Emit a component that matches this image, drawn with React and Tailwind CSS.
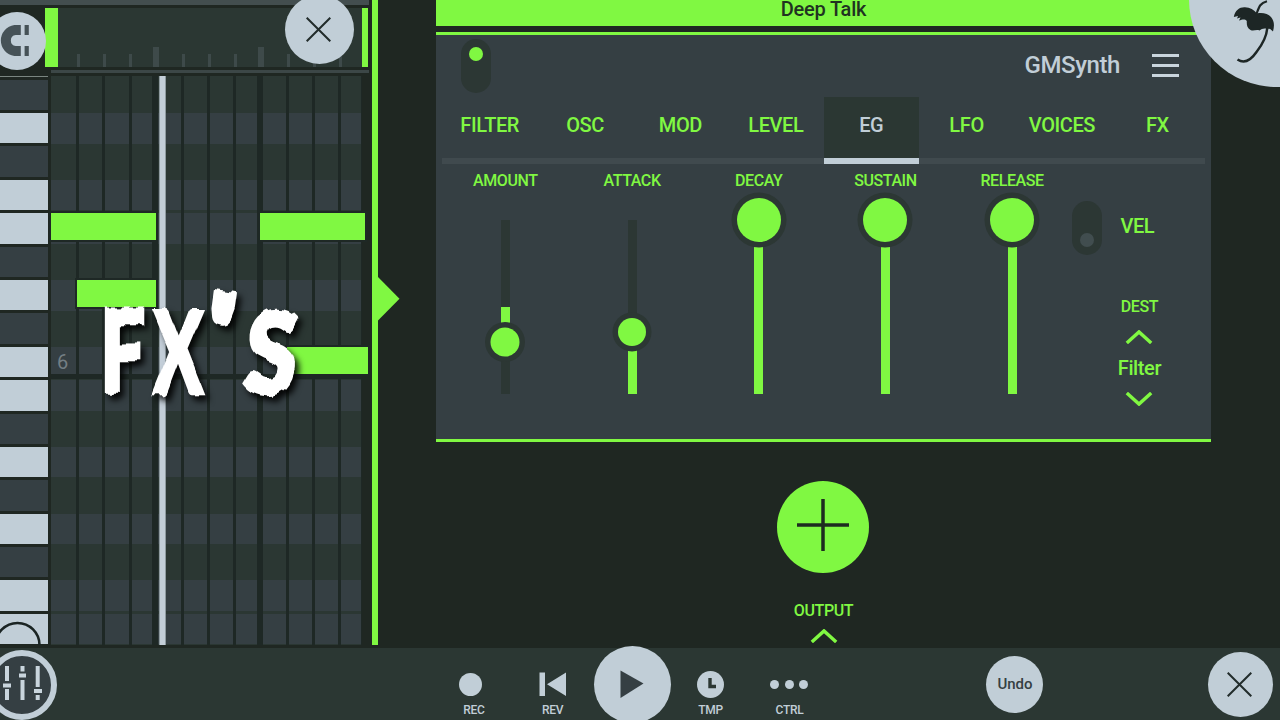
import { useState } from 'react';
import clsx from 'clsx';

// true = white key, from the top of the visible range
const KEYS = [
  false, true, false, true, true, false, true, false, true,
  true, false, true, false, true, false, true, true,
];

const NOTES = [
  { id: 1, className: 'left-[51px] top-[137.4px] w-[105px]' },
  { id: 2, className: 'left-[260px] top-[137.4px] w-[105px]' },
  { id: 3, className: 'left-[77px] top-[204px] w-[79px]' },
  { id: 4, className: 'left-[287px] top-[271px] w-[81px]' },
];

const TABS = ['FILTER', 'OSC', 'MOD', 'LEVEL', 'EG', 'LFO', 'VOICES', 'FX'];

// knob and fill are measured in px from the top of the track
const SLIDERS = [
  { name: 'AMOUNT', knob: 122, size: 29, from: 87, to: 122 },
  { name: 'ATTACK', knob: 112, size: 28, from: 112, to: 174 },
  { name: 'DECAY', knob: 0, size: 44, from: 0, to: 174 },
  { name: 'SUSTAIN', knob: 0, size: 44, from: 0, to: 174 },
  { name: 'RELEASE', knob: 0, size: 44, from: 0, to: 174 },
];

function CloseIcon() {
  return (
    <svg width="25" height="25" viewBox="0 0 25 25" stroke="#222c2b" strokeWidth="2">
      <path d="M0.7 0.7 L24.3 24.3 M24.3 0.7 L0.7 24.3" />
    </svg>
  );
}

function Chevron({ down, className }) {
  return (
    <svg
      width="28"
      height="14"
      viewBox="0 0 28 14"
      fill="none"
      stroke="#80f842"
      strokeWidth="3.4"
      className={clsx(down && 'rotate-180', className)}
    >
      <path d="M1.8 13 L14 1.9 L26.2 13" />
    </svg>
  );
}

function Ruler() {
  return (
    <div className="flex h-[59px] pl-[45px]">
      <div className="w-[13px] bg-[#80f842]" />
      <div className="flex w-[304px] items-end bg-[#2b3733] pl-[7px]">
        {Array.from({ length: 11 }, (_, i) => (
          <div key={i} className="relative h-full w-[26.2px] shrink-0">
            <div
              className={clsx(
                'absolute bottom-0 bg-[#3e4a4a]',
                i % 4 === 3 ? 'left-[9.6px] h-5 w-[6px]' : 'left-3 h-[13px] w-[3px]'
              )}
            />
          </div>
        ))}
      </div>
      <div className="w-[6px] bg-[#80f842]" />
    </div>
  );
}

function PianoRoll() {
  return (
    <div className="relative flex h-[569px] overflow-hidden">
      <div className="w-12 shrink-0 border-t border-[#7a8580] pt-[2.6px]">
        {KEYS.map((white, i) => (
          <div key={i} className="h-[33.4px]">
            <div className={clsx('h-[30.4px]', white ? 'bg-[#c1ced7]' : 'bg-[#353f43]')} />
          </div>
        ))}
      </div>
      <svg className="absolute bottom-0 left-0" width="48" height="24" fill="none" stroke="#1a2423" strokeWidth="2.6">
        <circle cx="17.5" cy="24" r="22" />
      </svg>

      <div className="relative ml-[3px] w-[311px] overflow-hidden bg-[#2b3733] pt-[3.6px]">
        {KEYS.map((white, i) => (
          <div key={i} className="h-[33.4px]">
            <div className={clsx('h-[30.6px]', white ? 'bg-[#353f43]' : 'bg-[#2b3733]')} />
          </div>
        ))}
        <div className="absolute left-0 top-[298px] h-[5px] w-full bg-[#1e2825]" />
        <div className="absolute inset-y-0 left-0 flex">
          {Array.from({ length: 12 }, (_, i) => (
            <div key={i} className="flex w-[26.2px] shrink-0 justify-end">
              <div
                className={clsx(
                  'translate-x-[2px] bg-[#1e2825]',
                  i % 4 === 3 ? 'w-[6px]' : 'w-[3px]'
                )}
              />
            </div>
          ))}
        </div>
        <span className="absolute left-[6px] top-[273px] text-[20px] leading-[26px] text-[#737e83]">6</span>
      </div>

      {NOTES.map((n) => (
        <div
          key={n.id}
          className={clsx('absolute h-[27px] bg-[#80f842] shadow-[0_0_0_2px_#1e2825]', n.className)}
        />
      ))}
      <div className="absolute left-[159px] top-0 h-full w-[7px] border-x border-[#8e9a9f] bg-[#c3ced8]" />
    </div>
  );
}

function Editor() {
  return (
    <section className="relative h-[648px] w-[378px] shrink-0">
      <div className="flex h-[645px]">
        <div className="w-[372px]">
          <div className="mb-[3px] h-[5px] w-[369px] bg-[#434e4f]" />
          <Ruler />
          <div className="mb-[3px] ml-[51px] mt-[3px] h-[3px] w-[318px] bg-[#3c4747]" />
          <PianoRoll />
        </div>
        <div className="w-[6px] bg-[#80f842]" />
      </div>
      <svg className="absolute left-[377px] top-[276px]" width="24" height="46" fill="#80f842">
        <path d="M0 0 L22.5 22.7 L0 45.4 Z" />
      </svg>

      <button className="absolute left-[-12px] top-[11.5px] h-[58px] w-[58px] rounded-full bg-[#c1ced7]">
        <svg className="absolute left-[10px] top-3" width="34" height="34" fill="none" stroke="#465257">
          <path d="M22.8 6 H17 A10.6 10.6 0 0 0 17 27 H22.8" strokeWidth="10" />
          <path d="M28.7 1 V11 M28.7 22 V32" strokeWidth="4.2" />
        </svg>
      </button>
      <button className="absolute left-[284.5px] top-[-5px] flex h-[69px] w-[69px] items-center justify-center rounded-full bg-[#c1ced7] pr-[2px]">
        <CloseIcon />
      </button>
    </section>
  );
}

function Toggle({ on }) {
  return (
    <div
      className={clsx(
        'flex h-[54px] w-[30px] justify-center rounded-full bg-[#2c3734] px-2',
        on ? 'items-start py-[7.5px]' : 'items-end py-2'
      )}
    >
      <div className={clsx('h-[14px] w-[14px] rounded-full', on ? 'bg-[#80f842]' : 'bg-[#414d4f]')} />
    </div>
  );
}

function Slider({ name, knob, size, from, to }) {
  return (
    <div className="flex w-[126.7px] flex-col items-center text-[16px] leading-5">
      {name}
      <div className="relative mt-[29px] h-[174px] w-[9px] bg-[#2c3734]">
        <div className="absolute w-full bg-[#80f842]" style={{ top: from, height: to - from }} />
        <div
          className="absolute left-1/2 -translate-x-1/2 -translate-y-1/2 rounded-full bg-[#80f842] shadow-[0_0_0_5.5px_#2c3734]"
          style={{ top: knob, width: size, height: size }}
        />
      </div>
    </div>
  );
}

function SynthPanel() {
  const [tab, setTab] = useState('EG');

  return (
    <div className="ml-[58px] w-[775px] font-medium tracking-[-0.4px] text-[#80f842]">
      <div className="h-[26px] bg-[#80f842] text-center text-[20px] leading-[19px] tracking-[-0.2px] text-[#203321]">
        Deep Talk
      </div>
      <div className="mt-[6px] h-[410px] border-y-[3px] border-[#80f842] bg-[#353f43]">
        <div className="flex h-[62px] justify-between pl-[25px] pr-8 pt-1">
          <Toggle on />
          <div className="flex h-[52px] items-center gap-8 text-[24px] text-[#c1ced7]">
            GMSynth
            <div className="flex flex-col gap-[7px] pt-[1px]">
              <div className="h-[3px] w-[27px] bg-[#c9d5dd]" />
              <div className="h-[3px] w-[27px] bg-[#c9d5dd]" />
              <div className="h-[3px] w-[27px] bg-[#c9d5dd]" />
            </div>
          </div>
        </div>

        <div className="mx-[6px] grid h-[67px] grid-cols-8 text-[20px]">
          {TABS.map((t) => (
            <button
              key={t}
              onClick={() => setTab(t)}
              className={clsx(
                'border-b-[6px] pb-[5px]',
                t === tab ? 'border-[#c1ced7] bg-[#2b3733] text-[#c1ced7]' : 'border-[#404a4e]'
              )}
            >
              {t}
            </button>
          ))}
        </div>

        <div className="flex pl-[6px] pt-[7px]">
          {SLIDERS.map((s) => (
            <Slider key={s.name} {...s} />
          ))}
          <div className="w-[135px] pt-[29.5px]">
            <div className="flex gap-[18px] text-[20px] leading-[50px]">
              <div className="-ml-[3px]">
                <Toggle />
              </div>
              VEL
            </div>
            <div className="ml-[18px] mt-[42px] flex w-[92px] flex-col items-center text-[16px] leading-5">
              DEST
              <Chevron className="mt-[13px]" />
              <span className="mb-[10px] mt-[9px] text-[20px] leading-[30px]">Filter</span>
              <Chevron down className="-mt-[1px]" />
            </div>
          </div>
        </div>
      </div>

      <div className="flex flex-col items-center text-[16px] leading-5">
        <button className="mr-[1px] mt-[38.5px] flex h-[92px] w-[92px] items-center justify-center rounded-full bg-[#80f842]">
          <svg width="54" height="54" className="-mt-[4px]" stroke="#1e2b20" strokeWidth="3.5">
            <path d="M27 1 V53 M1 27 H53" />
          </svg>
        </button>
        <span className="mt-[28px]">OUTPUT</span>
        <Chevron className="mt-2" />
      </div>
    </div>
  );
}

function TransportItem({ label, className, labelClass, children }) {
  return (
    <button className={clsx('absolute top-0 flex w-16 flex-col items-center', className)}>
      <span className="mt-[21px] flex h-[31px] items-center">{children}</span>
      <span className={clsx('mt-[3px] text-[12px] font-medium leading-[14px] tracking-[-0.3px]', labelClass)}>
        {label}
      </span>
    </button>
  );
}

function Transport() {
  return (
    <footer className="relative h-[72px] bg-[#2b3733] text-[#c1ced7]">
      <div className="absolute -left-[13px] top-[2px] flex h-[70px] w-[70px] items-center justify-center rounded-full border-[6px] border-[#c1ced7] bg-[#353f43]">
        <svg width="42" height="36" viewBox="2 667 42 36" className="-mt-[2px] ml-[1px]" stroke="#c9d5dd" strokeWidth="4">
          <path d="M7 667 V682 M7 690 V701 M22.5 667 V672.5 M22.5 681 V701 M37.7 667 V688 M37.7 696 V701" />
          <path d="M3 686.5 H11 M19 676.5 H26 M34 692 H42" />
        </svg>
      </div>

      <TransportItem label="REC" className="left-[438.5px]" labelClass="pl-[7px]">
        <span className="h-[23px] w-[23px] rounded-full bg-[#c1ced7]" />
      </TransportItem>
      <TransportItem label="REV" className="left-[520.5px]">
        <svg width="28" height="25" fill="#c1ced7">
          <path d="M0.5 0.5 H6 V24 H0.5 Z M27 0.5 V24 L8 12.2 Z" />
        </svg>
      </TransportItem>
      <button className="absolute left-[593.5px] top-[-2px] h-[77px] w-[77px] rounded-full bg-[#c1ced7]">
        <svg className="absolute left-[26.5px] top-6" width="25" height="29" fill="#353f43">
          <path d="M0.5 0.5 L23.5 13.5 L0.5 28 Z" />
        </svg>
      </button>
      <TransportItem label="TMP" className="left-[678.5px]">
        <svg width="27" height="27">
          <circle cx="13.5" cy="13.5" r="13.5" fill="#c1ced7" />
          <path d="M13 7 V15.5 H19" fill="none" stroke="#2b3733" strokeWidth="3.4" />
        </svg>
      </TransportItem>
      <TransportItem label="CTRL" className="left-[757.5px]">
        <span className="mr-[1px] flex gap-[5.5px]">
          <span className="h-[9px] w-[9px] rounded-full bg-[#c1ced7]" />
          <span className="h-[9px] w-[9px] rounded-full bg-[#c1ced7]" />
          <span className="h-[9px] w-[9px] rounded-full bg-[#c1ced7]" />
        </span>
      </TransportItem>

      <button className="absolute left-[986px] top-2 h-[57px] w-[57px] rounded-full bg-[#c1ced7] pb-[1px] pl-[1px] text-[15px] font-medium text-[#353f43]">
        Undo
      </button>
      <button className="absolute left-[1208px] top-1 flex h-[65px] w-[65px] items-center justify-center rounded-full bg-[#c1ced7] pb-[1px] pr-[2px]">
        <CloseIcon />
      </button>
    </footer>
  );
}

function Palm() {
  return (
    <div className="absolute -top-[88px] left-[1189px] h-[175px] w-[175px] overflow-hidden rounded-full bg-[#c1ced7]">
      <svg className="absolute left-0 top-[88px]" width="91" height="88" viewBox="1189 0 91 88">
        <path
          fill="#1d2625"
          d="M1233.8 17 C1235 10 1240 6.8 1245 7.2 C1250 7.4 1254 9.5 1257 13.5 C1262 12.2 1268 13.5 1271 17 C1274.5 21 1274.5 26 1273 31.5 C1271.5 29.5 1269.5 28.5 1267 29 C1264 28 1261.5 29 1259.5 30.5 C1256 29.2 1253.5 31.5 1250.5 30 C1247 28 1246.6 25 1246.8 21 C1244.5 18.5 1242 20 1239 20.5 L1240.5 17.5 L1237 18.5 L1238 16 Z"
        />
        <path
          fill="none"
          stroke="#1d2625"
          strokeWidth="2.2"
          d="M1267 1.2 C1260 3 1259 7 1256.5 14"
        />
        <path
          fill="none"
          stroke="#1d2625"
          strokeWidth="2.5"
          d="M1267.3 28 C1266.5 37 1262 45 1256.5 52 C1251 60 1245 64.5 1237.5 59.5"
        />
      </svg>
    </div>
  );
}

// Video caption, lies over the piano roll
function Caption() {
  return (
    <svg className="absolute left-[80px] top-[250px]" width="250" height="180" viewBox="80 250 250 180">
      <defs>
        {/* shifts the letters up and down only, so that the stroke ends get ragged */}
        <filter id="brush" x="-10%" y="-10%" width="125%" height="125%" colorInterpolationFilters="sRGB">
          <feTurbulence type="fractalNoise" baseFrequency="0.13 0.01" numOctaves="1" seed="4" />
          <feColorMatrix values="0 0 0 0 0.5  0 1 0 0 0  0 0 1 0 0  0 0 0 0 1" result="noise" />
          <feDisplacementMap
            in="SourceGraphic"
            in2="noise"
            scale="10"
            xChannelSelector="R"
            yChannelSelector="G"
            result="rough"
          />
          <feDropShadow in="rough" dx="4" dy="5" stdDeviation="3" floodColor="#000" floodOpacity="0.9" />
        </filter>
      </defs>
      <g
        filter="url(#brush)"
        fill="#fff"
        stroke="#fff"
        strokeWidth="4.5"
        fontFamily="Lato, sans-serif"
        fontWeight="900"
        fontSize="112"
      >
        <text transform="translate(100.5 392) scale(0.7 1)">F</text>
        <text transform="translate(154 393) scale(0.64 1.01)">X</text>
        <text transform="translate(199 368) rotate(8) scale(1.3 0.95)">'</text>
        <text transform="translate(242 393) skewX(-5) scale(0.84 1)">S</text>
      </g>
    </svg>
  );
}

export default function App() {
  return (
    <div className="relative h-[720px] w-[1280px] overflow-hidden bg-[#1f2722] font-['Roboto',sans-serif]">
      <main className="flex h-[648px]">
        <Editor />
        <SynthPanel />
      </main>
      <Transport />
      <Palm />
      <Caption />
    </div>
  );
}
